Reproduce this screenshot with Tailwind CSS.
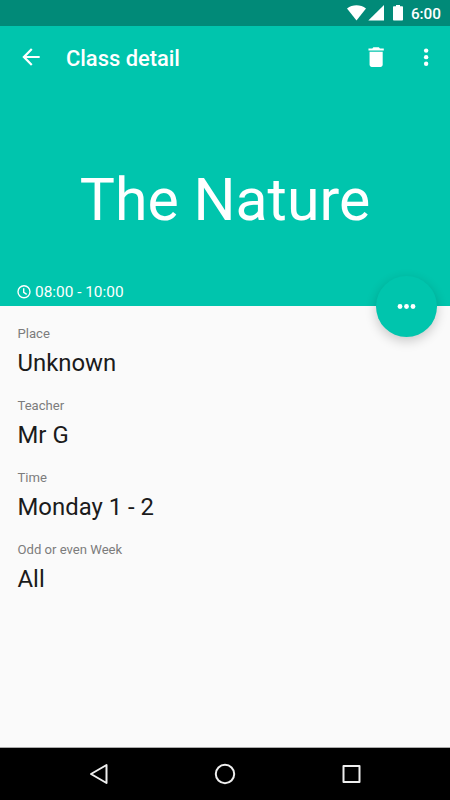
<!DOCTYPE html>
<html lang="en">
<head>
  <meta charset="UTF-8">
  <meta name="viewport" content="width=device-width, initial-scale=1.0">
  <title>Class detail</title>
  <script src="https://cdn.jsdelivr.net/npm/@tailwindcss/browser@4"></script>
</head>
<body class="bg-[#fafafa] font-[Roboto,sans-serif]">
  <div class="flex flex-col w-[450px] h-[800px] overflow-hidden">
    <!-- Status Bar -->
    <div class="h-[26px] shrink-0 bg-[#018a78] flex items-center justify-end pr-[9px] text-white">
      <svg class="w-[19px] h-4 mr-[2px]" viewBox="0 0 19 16" fill="currentColor"><path d="M0 3.5C5.5-.8 13.500-.8 19 3.500L9.500 15.500Z"/></svg>
      <svg class="w-4 h-4 mr-[9px]" viewBox="0 0 16 16" fill="currentColor"><path d="M16 0v15.500H.3Z"/></svg>
      <svg class="w-[10px] h-4 mr-[8px]" viewBox="0 0 10 16" fill="currentColor"><path d="M3 0h4v1.300h2.200q.8 0 .8.800v12.600q0 .8-.8.800H.8q-.8 0-.8-.8V2.100q0-.8.800-.8H3Z"/></svg>
      <span class="text-[15.3px] leading-none font-medium mt-[3px]">6:00</span>
    </div>

    <!-- Header -->
    <header class="relative h-[280px] shrink-0 bg-[#00c5ad] text-white flex flex-col">
      <div class="h-[62px] shrink-0 flex items-center pl-[18px] pr-[11px]">
        <svg class="w-[26px] h-[26px]" viewBox="0 0 24 24" fill="currentColor"><path d="M20 11H7.830l5.590-5.590L12 4l-8 8 8 8 1.410-1.410L7.830 13H20v-2z"/></svg>
        <h1 class="ml-[22px] mt-[3px] text-[21.9px] font-medium leading-none">Class detail</h1>
        <svg class="w-[26.250px] h-[26.250px] ml-auto" viewBox="0 0 24 24" fill="currentColor"><path d="M6 19c0 1.100.9 2 2 2h8c1.100 0 2-.9 2-2V7H6v12zM19 4h-3.500l-1-1h-5l-1 1H5v2h14V4z"/></svg>
        <svg class="w-[26.250px] h-[26.250px] ml-[24px]" viewBox="0 0 24 24" fill="currentColor"><circle cx="12" cy="6" r="2"/><circle cx="12" cy="12" r="2"/><circle cx="12" cy="18" r="2"/></svg>
      </div>
      <p class="flex-1 pt-[77px] text-center text-[59px] leading-[70px] whitespace-nowrap">The Nature</p>
      <div class="flex items-center pl-[17px] h-[28px] text-[15.400px]">
        <svg class="w-[14px] h-[14px] mr-1" viewBox="0 0 14 14" fill="none" stroke="currentColor" stroke-width="1.400"><circle cx="7" cy="6.700" r="6"/><path d="M6.700 3.300v4l3 2"/></svg>
        <span class="mt-[2px]">08:00 - 10:00</span>
      </div>
      <!-- Floating Button -->
      <button class="absolute left-[376px] top-[250px] w-[61px] h-[61px] rounded-full bg-[#00c5ad] shadow-[0_4px_12px_rgba(0,0,0,0.2)] flex items-center justify-center">
        <svg class="w-[26px] h-[26px]" viewBox="0 0 26 26" fill="currentColor"><circle cx="6" cy="12.500" r="2.400"/><circle cx="12.500" cy="12.500" r="2.400"/><circle cx="19" cy="12.500" r="2.400"/></svg>
      </button>
    </header>

    <!-- Details -->
    <dl class="flex-1 pt-[20px] pl-[17.500px]">
      <div class="h-[72px]">
        <dt class="text-[13.1px] leading-4 text-[#7c7c7c]">Place</dt>
        <dd class="mt-[7px] text-[23.900px] leading-7 text-[#1b1b1b]">Unknown</dd>
      </div>
      <div class="h-[72px]">
        <dt class="text-[13.1px] leading-4 text-[#7c7c7c]">Teacher</dt>
        <dd class="mt-[7px] text-[23.900px] leading-7 text-[#1b1b1b]">Mr G</dd>
      </div>
      <div class="h-[72px]">
        <dt class="text-[13.1px] leading-4 text-[#7c7c7c]">Time</dt>
        <dd class="mt-[7px] text-[23.900px] leading-7 text-[#1b1b1b]">Monday 1 - 2</dd>
      </div>
      <div class="h-[72px]">
        <dt class="text-[13.1px] leading-4 text-[#7c7c7c]">Odd or even Week</dt>
        <dd class="mt-[7px] text-[23.900px] leading-7 text-[#1b1b1b]">All</dd>
      </div>
    </dl>

    <!-- Navigation Bar -->
    <nav class="h-[53px] shrink-0 bg-black border-t border-[#aaa] text-[#eee] flex items-center justify-between pl-[87px] pr-[88px]">
      <svg class="w-[22px] h-[22px]" viewBox="0 0 22 22" fill="none" stroke="currentColor" stroke-width="2" stroke-linejoin="round"><path d="M19.500 2v18L4 11Z"/></svg>
      <svg class="w-[22px] h-[22px]" viewBox="0 0 22 22" fill="none" stroke="currentColor" stroke-width="2"><circle cx="11" cy="11" r="9.200"/></svg>
      <svg class="w-[22px] h-[22px]" viewBox="0 0 22 22" fill="none" stroke="currentColor" stroke-width="2" stroke-linejoin="round"><path d="M3.500 3h16v16h-16Z"/></svg>
    </nav>
  </div>
</body>
</html>
